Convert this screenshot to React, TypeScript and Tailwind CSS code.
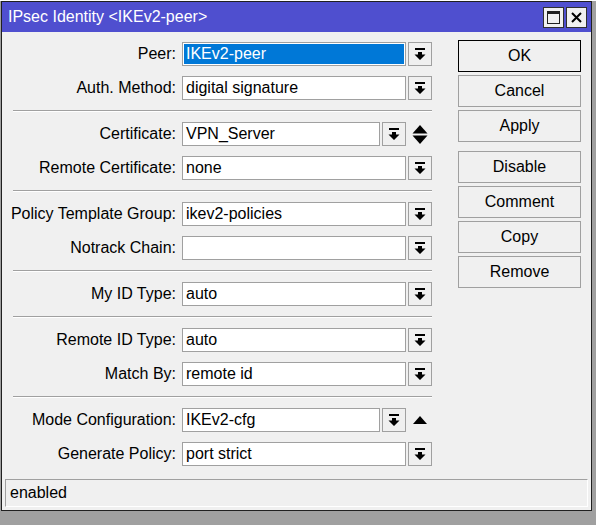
import React from "react";

const DropIcon = () => (
  <svg width="12" height="13" viewBox="0 0 12 13">
    <rect x="1" y="0" width="10" height="2" fill="#000" />
    <path d="M4 4 H8 V6.5 H11.5 L6 12 L0.5 6.5 H4 Z" fill="#000" />
  </svg>
);

const DropBtn = () => (
  <div className="w-[24px] h-[24px] border border-[#a0a0a0] bg-[#f0f0f0] flex items-center justify-center shrink-0">
    <DropIcon />
  </div>
);

type RowProps = {
  label: string;
  value: string;
  selected?: boolean;
  extra?: "updown" | "up";
};

const Row = ({ label, value, selected, extra }: RowProps) => (
  <div className="flex items-center h-[24px]">
    <div className="w-[180px] text-right pr-[6px] shrink-0 whitespace-nowrap">{label}:</div>
    <div className={`${extra ? "w-[198px]" : "w-[224px]"} h-[24px] border border-[#a0a0a0] bg-white p-[1px] shrink-0`}>
      <div className={`h-full flex items-center pl-[2px] ${selected ? "bg-[#0078d7] text-white" : ""}`}>{value}</div>
    </div>
    <div className="ml-[2px]">
      <DropBtn />
    </div>
    {extra === "updown" && (
      <div className="ml-[6px] flex flex-col items-center">
        <svg width="16" height="19" viewBox="0 0 16 19">
          <path d="M8 0 L15.5 8.5 H0.5 Z" fill="#000" />
          <path d="M0.5 10.5 H15.5 L8 19 Z" fill="#000" />
        </svg>
      </div>
    )}
    {extra === "up" && (
      <div className="ml-[7px] flex items-center">
        <svg width="14" height="9" viewBox="0 0 14 9">
          <path d="M7 0 L14 8 H0 Z" fill="#000" />
        </svg>
      </div>
    )}
  </div>
);

const Sep = () => <div className="my-[10px] h-[1px] bg-[#a0a0a0] border-b border-white box-content ml-[11px] w-[419px]" />;

const Btn = ({ label, primary }: { label: string; primary?: boolean }) => (
  <div
    className={`w-[123px] h-[32px] flex items-center justify-center bg-[#f0f0f0] border ${
      primary ? "border-black" : "border-[#a0a0a0]"
    }`}
  >
    {label}
  </div>
);

export default function App() {
  return (
    <div
      className="w-[596px] h-[525px] bg-[#a0a0a0] relative overflow-hidden text-[16px] text-black"
      style={{ fontFamily: '"Liberation Sans", Arial, sans-serif' }}
    >
      <div className="h-[1px] bg-white w-full" />
      <div className="ml-[1px] w-[591px] h-[510px] border border-[#202020] bg-[#f0f0f0] flex flex-col">
        {/* title bar */}
        <div className="h-[30px] bg-[#4f4fcf] flex items-center justify-between pl-[6px] pr-[4px] shrink-0">
          <div className="text-white text-[16px]">IPsec Identity &lt;IKEv2-peer&gt;</div>
          <div className="flex gap-[2px]">
            <div className="w-[21px] h-[21px] bg-[#f0f0f0] border border-[#303030] flex items-center justify-center">
              <div className="w-[13px] h-[13px] border border-[#202020] border-t-[3px]" />
            </div>
            <div className="w-[21px] h-[21px] bg-[#f0f0f0] border border-[#303030] flex items-center justify-center">
              <svg width="11" height="11" viewBox="0 0 11 11">
                <path d="M1 1 L10 10 M10 1 L1 10" stroke="#000" strokeWidth="2" />
              </svg>
            </div>
          </div>
        </div>
        {/* body */}
        <div className="flex flex-1 pt-[10px]">
          <div className="w-[456px] flex flex-col">
            <div className="flex flex-col gap-[10px]">
              <Row label="Peer" value="IKEv2-peer" selected />
              <Row label="Auth. Method" value="digital signature" />
            </div>
            <Sep />
            <div className="flex flex-col gap-[10px]">
              <Row label="Certificate" value="VPN_Server" extra="updown" />
              <Row label="Remote Certificate" value="none" />
            </div>
            <Sep />
            <div className="flex flex-col gap-[10px]">
              <Row label="Policy Template Group" value="ikev2-policies" />
              <Row label="Notrack Chain" value="" />
            </div>
            <Sep />
            <div className="flex flex-col gap-[10px]">
              <Row label="My ID Type" value="auto" />
            </div>
            <Sep />
            <div className="flex flex-col gap-[10px]">
              <Row label="Remote ID Type" value="auto" />
              <Row label="Match By" value="remote id" />
            </div>
            <Sep />
            <div className="flex flex-col gap-[10px]">
              <Row label="Mode Configuration" value="IKEv2-cfg" extra="up" />
              <Row label="Generate Policy" value="port strict" />
            </div>
          </div>
          <div className="flex flex-col -mt-[2px]">
            <div className="flex flex-col gap-[3px]">
              <Btn label="OK" primary />
              <Btn label="Cancel" />
              <Btn label="Apply" />
            </div>
            <div className="flex flex-col gap-[3px] mt-[9px]">
              <Btn label="Disable" />
              <Btn label="Comment" />
              <Btn label="Copy" />
              <Btn label="Remove" />
            </div>
          </div>
        </div>
        {/* status bar */}
        <div className="mx-[3px] mb-[3px] h-[28px] border border-[#a0a0a0] border-r-white border-b-white flex items-center pl-[4px]">
          enabled
        </div>
      </div>
    </div>
  );
}
